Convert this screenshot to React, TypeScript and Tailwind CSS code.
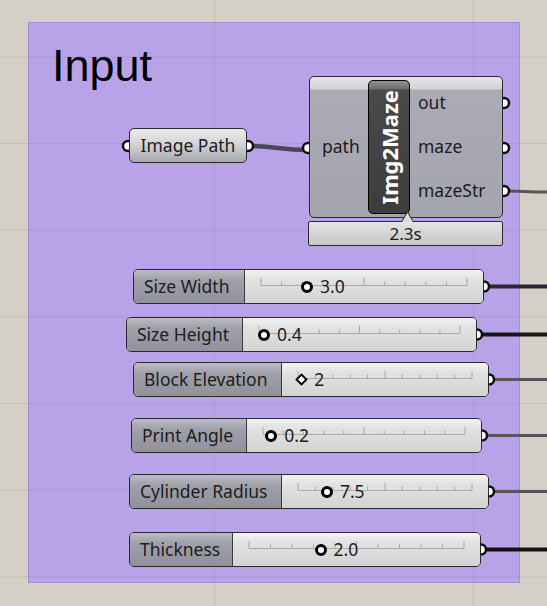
import React from "react";

type SliderData = {
  label: string;
  x: number;
  y: number;
  w: number;
  lw: number;
  frac: number;
  value: string;
  diamond?: boolean;
  wire: string;
  ww: number;
};

const sliders: SliderData[] = [
  { label: "Size Width", x: 133, y: 269, w: 351, lw: 112, frac: 0.223, value: "3.0", wire: "#2b2833", ww: 4 },
  { label: "Size Height", x: 126, y: 317, w: 351, lw: 117, frac: 0.025, value: "0.4", wire: "#161616", ww: 4 },
  { label: "Block Elevation", x: 133, y: 362, w: 356, lw: 149, frac: 0.019, value: "2", diamond: true, wire: "#56545a", ww: 3 },
  { label: "Print Angle", x: 131, y: 418, w: 351, lw: 116, frac: 0.041, value: "0.2", wire: "#56545a", ww: 3 },
  { label: "Cylinder Radius", x: 129, y: 474, w: 360, lw: 153, frac: 0.166, value: "7.5", wire: "#56545a", ww: 3 },
  { label: "Thickness", x: 129, y: 532, w: 352, lw: 104, frac: 0.333, value: "2.0", wire: "#121212", ww: 4 },
];

const ticks = Array.from({ length: 11 }, (_, i) => i);

function Slider({ s }: { s: SliderData }) {
  return (
    <div
      className="absolute flex h-[35px] rounded-[5px] border border-[#2a2a2a] overflow-hidden font-['Noto_Sans',sans-serif]"
      style={{ left: s.x, top: s.y, width: s.w }}
    >
      <div
        className="flex items-center pl-[10px] border-r border-[#3a3a3a] bg-[linear-gradient(to_bottom,#bcbcc4_0%,#a0a0aa_30%,#91919d_100%)] text-[17.5px] leading-none text-[#1c1c1c] whitespace-nowrap shrink-0"
        style={{ width: s.lw - 1 }}
      >
        {s.label}
      </div>
      <div className="relative flex-1 bg-[linear-gradient(to_bottom,#f3f3f3_0%,#e3e3e3_25%,#d3d3d3_100%)]">
        <div className="absolute inset-y-0 left-[16px] right-[16px]">
          <svg className="absolute inset-0 w-full h-full overflow-visible">
            <line x1="0%" x2="100%" y1="15.5" y2="15.5" stroke="#ababab" strokeWidth="1" />
            {ticks.map((i) => (
              <line
                key={i}
                x1={`${i * 10}%`}
                x2={`${i * 10}%`}
                y1={i === 0 || i === 5 || i === 10 ? 8 : 11.5}
                y2="15.5"
                stroke="#a6a6a6"
                strokeWidth="1"
              />
            ))}
          </svg>
          {s.diamond ? (
            <div
              className="absolute top-[12px] w-[9px] h-[9px] rotate-45 border-[2.5px] border-black bg-white"
              style={{ left: `calc(${s.frac * 100}% - 4.5px)` }}
            />
          ) : (
            <div
              className="absolute top-[10.5px] w-[12px] h-[12px] rounded-full border-[3px] border-black bg-white"
              style={{ left: `calc(${s.frac * 100}% - 6px)` }}
            />
          )}
          <span
            className="absolute inset-y-0 flex items-center text-[17.5px] leading-none text-[#1c1c1c] whitespace-nowrap"
            style={{ left: `calc(${s.frac * 100}% + 13px)` }}
          >
            {s.value}
          </span>
        </div>
      </div>
    </div>
  );
}

export default function App() {
  const gridX = [214, 473];
  const gridY = [57, 143.5, 230, 317, 403.5, 490, 577];
  const grips: [number, number][] = [
    [128, 146],
    [248, 146],
    [308, 148],
    [504, 103],
    [504, 148],
    [504, 191],
    ...sliders.map((s) => [s.x + s.w, s.y + 17.5] as [number, number]),
  ];

  return (
    <div className="relative w-[547px] h-[606px] overflow-hidden bg-[#d4d0c8] font-['Noto_Sans',sans-serif]">
      {/* group */}
      <div className="absolute left-[28px] top-[22px] w-[492px] h-[561px] bg-[#b9a3e8] border border-[#a38ed6] pl-[23px] pt-[20px]">
        <div className="font-['Liberation_Sans',Arial,sans-serif] text-[45px] leading-[45px] text-black">Input</div>
      </div>

      {/* grid */}
      <svg className="absolute inset-0 w-[547px] h-[606px] pointer-events-none">
        {gridX.map((x) => (
          <line key={`x${x}`} x1={x + 0.5} x2={x + 0.5} y1="0" y2="606" stroke="rgba(0,0,0,0.075)" strokeWidth="1" />
        ))}
        {gridY.map((y) => (
          <line key={`y${y}`} x1="0" x2="547" y1={y} y2={y} stroke="rgba(0,0,0,0.075)" strokeWidth="1" />
        ))}
      </svg>

      {/* wires and grips */}
      <svg className="absolute inset-0 w-[547px] h-[606px] pointer-events-none">
        <path d="M248 146 C 278 146, 278 150, 308 150" fill="none" stroke="#4b4560" strokeWidth="4.5" />
        <path d="M504 191 C 525 191, 525 192, 547 192" fill="none" stroke="#58565c" strokeWidth="3" />
        {sliders.map((s) => (
          <path
            key={s.label}
            d={`M${s.x + s.w} ${s.y + 17.5} L547 ${s.y + 17.5}`}
            fill="none"
            stroke={s.wire}
            strokeWidth={s.ww}
          />
        ))}
        {grips.map(([x, y], i) => (
          <circle key={i} cx={x} cy={y} r="5" fill="#ffffff" stroke="#0e0e0e" strokeWidth="2.5" />
        ))}
      </svg>

      {/* Image Path panel */}
      <div className="absolute left-[129px] top-[128px] w-[118px] h-[35px] rounded-[5px] border border-[#2a2a2a] bg-[linear-gradient(to_bottom,#ececec_0%,#d4d4d8_45%,#a6a6ae_100%)] flex items-center justify-center text-[17.5px] leading-none text-[#1c1c1c] whitespace-nowrap">
        Image Path
      </div>

      {/* Img2Maze component */}
      <div className="absolute left-[309px] top-[76px] w-[194px] h-[142px] rounded-[5px] border border-[#2a2a2a] bg-[linear-gradient(to_bottom,#e6e6ea_0px,#d2d2d6_12px,#ababb5_13px,#a4a4ae_100%)] flex text-[17.5px] leading-none text-[#1c1c1c]">
        <div className="w-[58px] shrink-0 flex items-center pl-[12px]">path</div>
        <div className="my-[3px] w-[42px] shrink-0 rounded-[5px] border border-black bg-[linear-gradient(to_bottom,#929292_0px,#6c6c6c_8px,#4a4a4a_9px,#3d3d3d_100%)] flex items-center justify-center">
          <span className="[writing-mode:vertical-rl] rotate-180 text-white font-bold text-[22px] leading-none whitespace-nowrap">
            Img2Maze
          </span>
        </div>
        <div className="flex-1 flex flex-col justify-center pl-[8px]">
          <div className="h-[44px] flex items-center">out</div>
          <div className="h-[44px] flex items-center">maze</div>
          <div className="h-[44px] flex items-center">mazeStr</div>
        </div>
      </div>

      {/* timing bar */}
      <div className="absolute left-[308px] top-[221px] w-[195px] h-[25px] rounded-[2px] border border-[#2a2a2a] bg-[linear-gradient(to_bottom,#e4e4e4_0%,#d4d4d4_50%,#c6c6c6_100%)] flex items-center justify-center text-[17px] leading-none text-[#1c1c1c]">
        2.3s
      </div>
      <svg className="absolute left-[401px] top-[211px] w-[13px] h-[12px]" viewBox="0 0 13 12">
        <polygon points="0.5,11 6.5,1 12.5,11" fill="#dcdcdc" />
        <polyline points="0.5,11 6.5,1 12.5,11" fill="none" stroke="#222" strokeWidth="1" />
      </svg>

      {sliders.map((s) => (
        <Slider key={s.label} s={s} />
      ))}
    </div>
  );
}
